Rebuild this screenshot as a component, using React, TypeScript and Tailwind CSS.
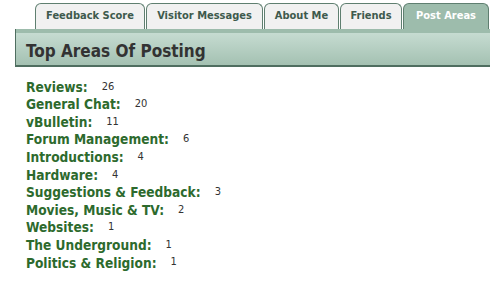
import React from "react";

// post areas tab of a profile page
type Area = {
  name: string;
  posts: number;
};

type Tab = {
  label: string;
  width: string;
};

const tabs: Tab[] = [
  { label: "Feedback Score", width: "w-[110px]" },
  { label: "Visitor Messages", width: "w-[117px]" },
  { label: "About Me", width: "w-[75px]" },
  { label: "Friends", width: "w-[62px]" },
  { label: "Post Areas", width: "w-[86px]" },
];

const areas: Area[] = [
  { name: "Reviews", posts: 26 },
  { name: "General Chat", posts: 20 },
  { name: "vBulletin", posts: 11 },
  { name: "Forum Management", posts: 6 },
  { name: "Introductions", posts: 4 },
  { name: "Hardware", posts: 4 },
  { name: "Suggestions & Feedback", posts: 3 },
  { name: "Movies, Music & TV", posts: 2 },
  { name: "Websites", posts: 1 },
  { name: "The Underground", posts: 1 },
  { name: "Politics & Religion", posts: 1 },
];

function App() {
  return (
    <div
      className="h-[293px] w-[490px] overflow-hidden bg-white"
      style={{ fontFamily: '"DejaVu Sans Condensed", "DejaVu Sans", sans-serif' }}
    >
      {/* tab strip */}
      <div className="flex gap-[1px] pl-[35px] pt-[3px]">
        {tabs.map((tab) => {
          const active = tab.label === "Post Areas";
          return (
            <div
              key={tab.label}
              className={`${tab.width} ${
                active ? "bg-[#9dbcac] text-white" : "bg-[#f1f1f1] text-[#3e5a4d]"
              } flex h-[26px] shrink-0 items-center justify-center whitespace-nowrap rounded-t-[6px] border border-b-0 border-[#5f7f70] pb-[1px] text-[11px] font-bold`}
            >
              {tab.label}
            </div>
          );
        })}
      </div>

      {/* section header */}
      <div className="ml-[15px] border-b-2 border-l border-[#4f6e60] bg-gradient-to-b from-[#cadfd5] to-[#a4c1b2]">
        <div className="h-[4px] bg-[#9dbcac]" />
        <div className="flex h-[32px] items-center pl-[10px] pt-[5px] text-[17px] font-bold text-[#333333]">
          Top Areas Of Posting
        </div>
      </div>

      {/* list of forums */}
      <ul className="pl-[26px] pt-[11px]">
        {areas.map((area) => (
          <li key={area.name} className="flex h-[17.6px] items-center">
            <span className="text-[13.6px] font-bold text-[#2d6a2d]">{area.name}:</span>
            <span className="ml-[14px] text-[11px] text-[#333333]">{area.posts}</span>
          </li>
        ))}
      </ul>
    </div>
  );
}

export default App;
